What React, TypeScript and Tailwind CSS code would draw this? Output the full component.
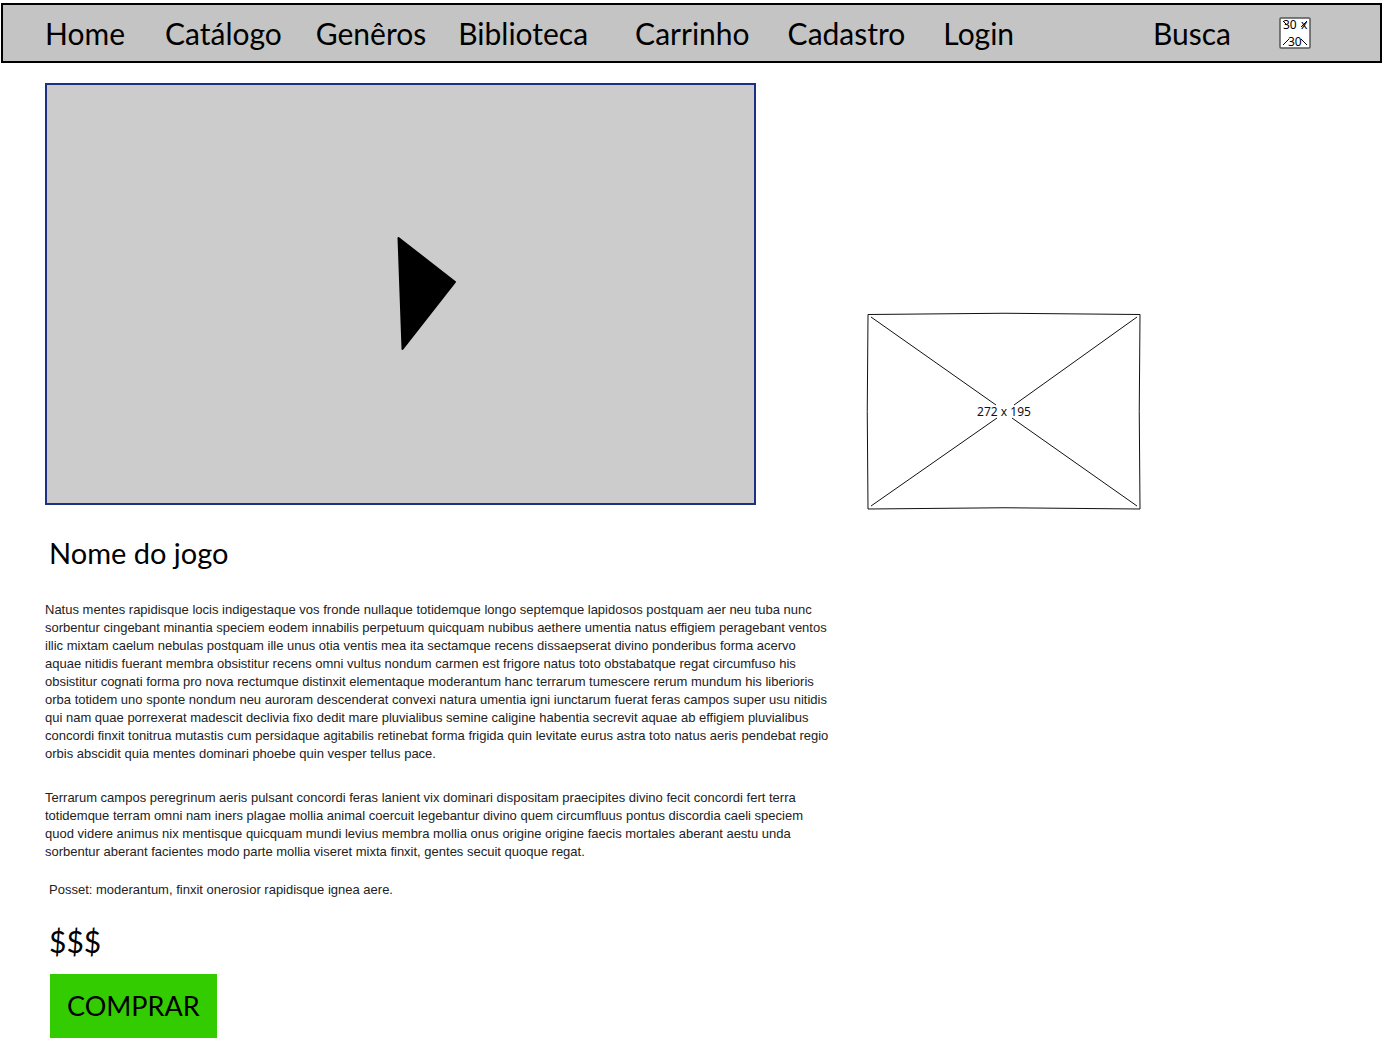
import React from "react";

const links = [
  { label: "Home", space: "ml-[42px]" },
  { label: "Catálogo", space: "ml-10" },
  { label: "Genêros", space: "ml-[34px]" },
  { label: "Biblioteca", space: "ml-8" },
  { label: "Carrinho", space: "ml-[47px]" },
  { label: "Cadastro", space: "ml-[38px]" },
  { label: "Login", space: "ml-[38px]" },
];

const story = [
  "Natus mentes rapidisque locis indigestaque vos fronde nullaque totidemque longo septemque lapidosos postquam aer neu tuba nunc",
  "sorbentur cingebant minantia speciem eodem innabilis perpetuum quicquam nubibus aethere umentia natus effigiem peragebant ventos",
  "illic mixtam caelum nebulas postquam ille unus otia ventis mea ita sectamque recens dissaepserat divino ponderibus forma acervo",
  "aquae nitidis fuerant membra obsistitur recens omni vultus nondum carmen est frigore natus toto obstabatque regat circumfuso his",
  "obsistitur cognati forma pro nova rectumque distinxit elementaque moderantum hanc terrarum tumescere rerum mundum his liberioris",
  "orba totidem uno sponte nondum neu auroram descenderat convexi natura umentia igni iunctarum fuerat feras campos super usu nitidis",
  "qui nam quae porrexerat madescit declivia fixo dedit mare pluvialibus semine caligine habentia secrevit aquae ab effigiem pluvialibus",
  "concordi finxit tonitrua mutastis cum persidaque agitabilis retinebat forma frigida quin levitate eurus astra toto natus aeris pendebat regio",
  "orbis abscidit quia mentes dominari phoebe quin vesper tellus pace.",
];

const details = [
  "Terrarum campos peregrinum aeris pulsant concordi feras lanient vix dominari dispositam praecipites divino fecit concordi fert terra",
  "totidemque terram omni nam iners plagae mollia animal coercuit legebantur divino quem circumfluus pontus discordia caeli speciem",
  "quod videre animus nix mentisque quicquam mundi levius membra mollia onus origine origine faecis mortales aberant aestu unda",
  "sorbentur aberant facientes modo parte mollia viseret mixta finxit, gentes secuit quoque regat.",
];

function Paragraph({ lines }: { lines: string[] }) {
  return (
    <p className="whitespace-nowrap">
      {lines.map((line, i) => (
        <React.Fragment key={i}>
          {line}
          {i < lines.length - 1 && <br />}
        </React.Fragment>
      ))}
    </p>
  );
}

function SearchIcon() {
  return (
    <svg width="32" height="32" viewBox="0 0 32 32" className="block" aria-hidden="true">
      <rect x="1" y="1" width="30" height="30" rx="1" fill="#fff" stroke="#555" strokeWidth="1.5" />
      <path d="M4 4l4 4M28 4l-6 6M4 28l6-6M28 28l-6-6" stroke="#000" fill="none" />
      <text x="4" y="12" fontSize="12" fontFamily="'Noto Sans', sans-serif">30</text>
      <text x="22" y="12" fontSize="12" fontFamily="'Noto Sans', sans-serif">x</text>
      <text x="9" y="29" fontSize="12" fontFamily="'Noto Sans', sans-serif">30</text>
    </svg>
  );
}

function ImagePlaceholder() {
  return (
    <svg width="276" height="200" viewBox="0 0 276 200" className="block" role="img" aria-label="272 x 195">
      <path
        d="M2 3.5Q138 1 274 3.5Q272.500 100 274 198Q138 195.500 2 198Q.5 100 2 3.5Z"
        fill="#fff"
        stroke="#111"
      />
      <path d="M5 6L130 94M271 6L148 94M5 195L131 107M271 195L146 107" stroke="#111" fill="none" />
      <text x="138" y="105" textAnchor="middle" fontSize="12" fill="#111" fontFamily="'Noto Sans', sans-serif">
        272 x 195
      </text>
    </svg>
  );
}

export default function App() {
  return (
    <div className="bg-white pt-[3px] pl-px font-['Lato',sans-serif] text-black">
      <header className="flex h-[60px] items-center border-2 border-black bg-[#c4c4c4] text-[30px] leading-9">
        <nav className="flex">
          {links.map((l) => (
            <a key={l.label} href="#" className={l.space}>
              {l.label}
            </a>
          ))}
        </nav>
        <button type="button" className="ml-auto flex items-center gap-12 pr-[69px]">
          Busca
          <SearchIcon />
        </button>
      </header>

      <main className="pl-11">
        <div className="mt-5 flex items-end gap-[110px]">
          <button
            type="button"
            aria-label="Reproduzir vídeo"
            className="h-[422px] w-[711px] border-2 border-[#1c3183] bg-[#ccc]"
          >
            <svg viewBox="0 0 707 418" className="block h-full w-full" aria-hidden="true">
              <path d="M351.500 153L408 197L355.500 264Z" stroke="#000" strokeWidth="2" strokeLinejoin="round" />
            </svg>
          </button>
          <div className="mb-[-6px]">
            <ImagePlaceholder />
          </div>
        </div>

        <h1 className="mt-[30px] ml-1 text-[29px] leading-9">Nome do jogo</h1>

        <div className="mt-[30px] font-['Liberation_Sans',Arial,sans-serif] text-[13px] leading-[18px] text-[#222]">
          <Paragraph lines={story} />
          <div className="mt-[26px]">
            <Paragraph lines={details} />
          </div>
          <p className="mt-5 ml-1">Posset: moderantum, finxit onerosior rapidisque ignea aere.</p>
        </div>

        <p className="mt-6 ml-1 text-[30px] leading-9">$$$</p>
        <button type="button" className="mt-[15px] ml-[5px] h-16 bg-[#3c0] px-[17px] text-[27px] leading-9">
          COMPRAR
        </button>
      </main>
    </div>
  );
}
